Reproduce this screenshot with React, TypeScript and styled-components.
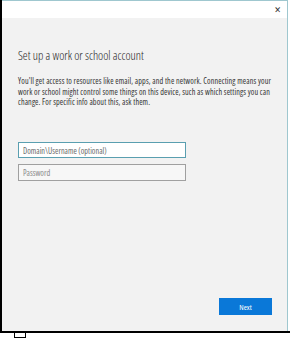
import styled, { createGlobalStyle } from "styled-components";

const Global = createGlobalStyle`
  html, body {
    margin: 0;
    padding: 0;
    background: #ffffff;
  }
  body {
    font-family: "Open Sans", "Noto Sans", "Liberation Sans", sans-serif;
    font-stretch: 75%;
  }
`;

const Frame = styled.div`
  width: 290px;
  height: 339px;
  display: flex;
  flex-direction: column;
  background: #ffffff;
`;

const Window = styled.div`
  width: 290px;
  height: 333px;
  box-sizing: border-box;
  border-left: 2px solid #000;
  border-bottom: 2px solid #000;
  padding-right: 2px;
  display: flex;
`;

const Dialog = styled.div`
  flex: 1;
  display: flex;
  flex-direction: column;
  border-top: 1px solid #9fc7cf;
  border-right: 1px solid #9fc7cf;
  background: #f2f2f2;
`;

const TitleBar = styled.div`
  height: 17px;
  background: #ffffff;
  display: flex;
  justify-content: flex-end;
  align-items: center;
  padding-right: 6px;
`;

const Close = styled.span`
  font-family: "DejaVu Sans", sans-serif;
  font-size: 9px;
  line-height: 9px;
  color: #333;
  margin-top: 2px;
`;

const Body = styled.div`
  flex: 1;
  display: flex;
  flex-direction: column;
  padding: 28px 15px 16px 16px;
`;

const Title = styled.h1`
  margin: 0;
  font-weight: 300;
  font-size: 12.2px;
  line-height: 20px;
  color: #1f1f1f;
`;

const Text = styled.p`
  margin: 10px 0 0;
  max-width: 256px;
  font-size: 8.1px;
  letter-spacing: 0.12px;
  line-height: 10.7px;
  color: #333333;
`;

const Form = styled.div`
  display: flex;
  flex-direction: column;
  gap: 6px;
  margin-top: 34px;
  width: 168px;
`;

const Field = styled.input<{ $active?: boolean }>`
  box-sizing: border-box;
  height: ${(p) => (p.$active ? "16px" : "17px")};
  width: 100%;
  margin: 0;
  padding: 0 4px;
  border: 1px solid ${(p) => (p.$active ? "#5a9fb0" : "#a0a0a0")};
  background: ${(p) => (p.$active ? "#ffffff" : "#f7f7f7")};
  font-family: "Open Sans", "Noto Sans", sans-serif;
  font-stretch: 75%;
  font-size: 8.2px;
  color: #333;
  outline: none;
  &::placeholder {
    color: ${(p) => (p.$active ? "#6b6b6b" : "#8a8a8a")};
  }
`;

const Footer = styled.div`
  margin-top: auto;
  display: flex;
  justify-content: flex-end;
`;

const Button = styled.button`
  width: 53px;
  height: 17px;
  border: none;
  padding: 0;
  background: #0a78d8;
  color: #ffffff;
  font-family: "Open Sans", "Noto Sans", sans-serif;
  font-stretch: 75%;
  font-size: 7.8px;
`;

const Tab = styled.div`
  width: 12px;
  height: 5px;
  margin-left: 14px;
  box-sizing: border-box;
  border: 1.5px solid #000;
  border-top: none;
  background: #fff;
`;

export default function App() {
  return (
    <>
      <Global />
      <Frame>
        <Window>
          <Dialog>
            <TitleBar>
              <Close>✕</Close>
            </TitleBar>
            <Body>
              <Title>Set up a work or school account</Title>
              <Text>
                You'll get access to resources like email, apps, and the network. Connecting means your
                work or school might control some things on this device, such as which settings you can
                change. For specific info about this, ask them.
              </Text>
              <Form>
                <Field $active placeholder="Domain\Username (optional)" />
                <Field type="password" placeholder="Password" />
              </Form>
              <Footer>
                <Button>Next</Button>
              </Footer>
            </Body>
          </Dialog>
        </Window>
        <Tab />
      </Frame>
    </>
  );
}
